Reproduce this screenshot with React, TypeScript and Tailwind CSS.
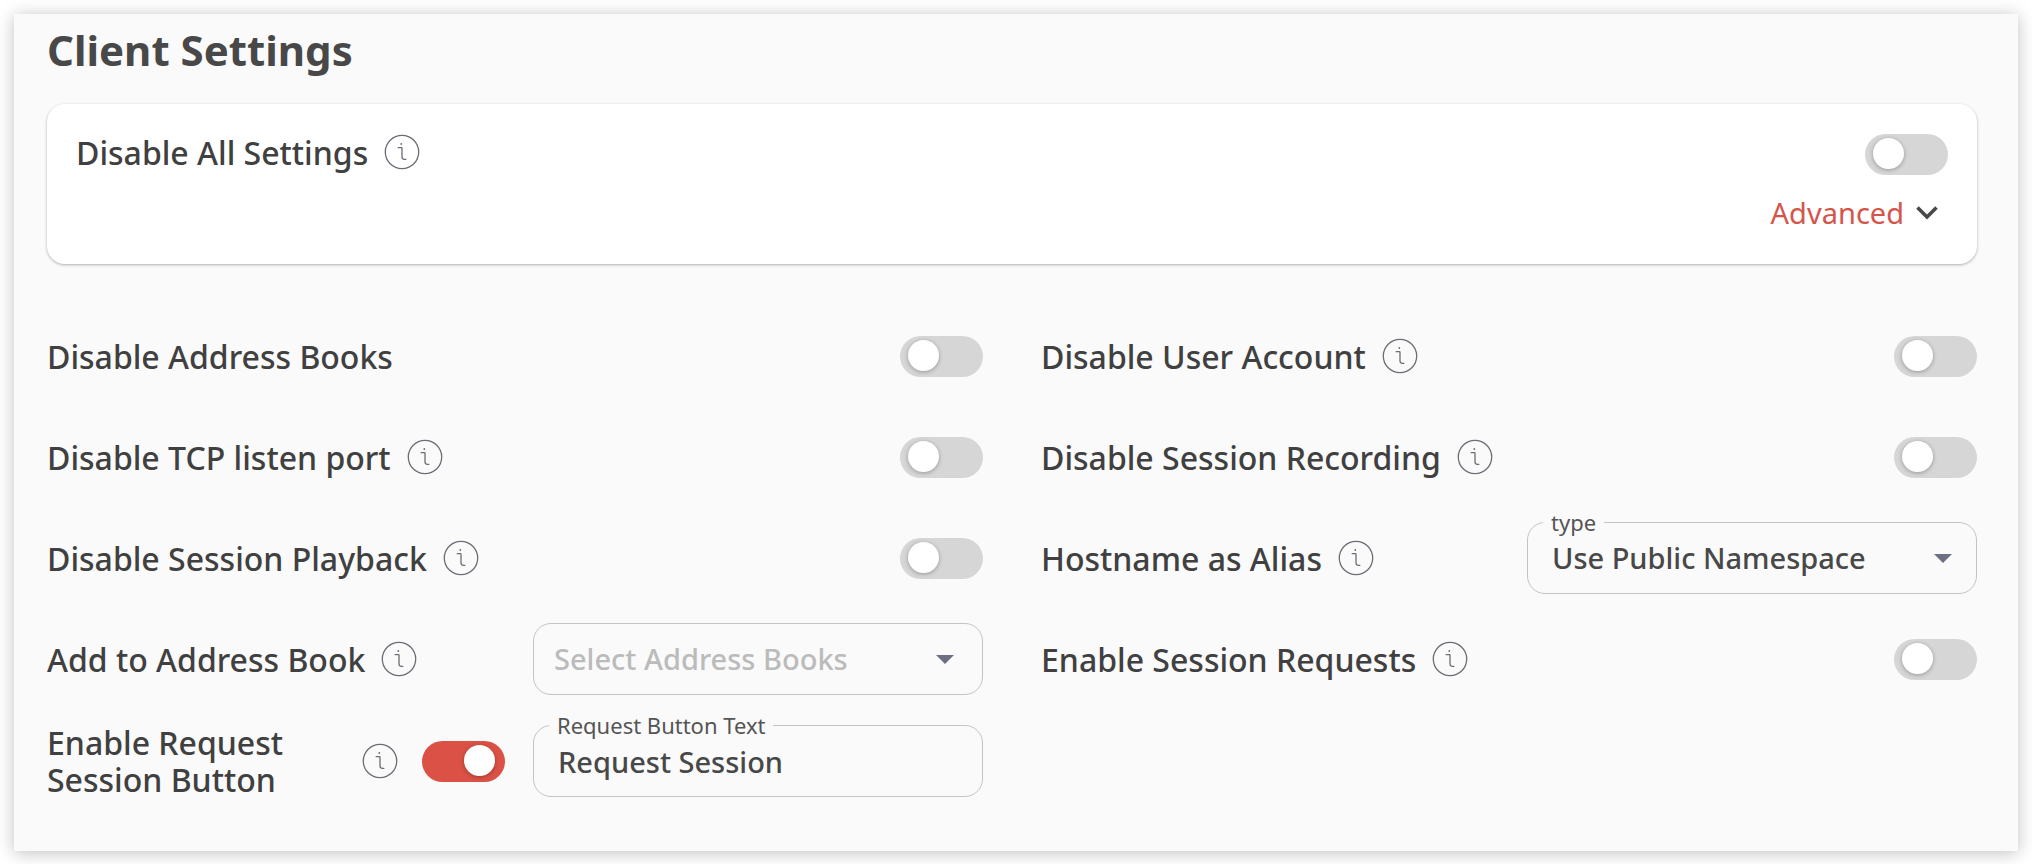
import { useState } from "react";

type ToggleRowProps = {
  id: string;
  label: string;
  info?: boolean;
};

const labelDesign = "text-[32px] leading-[37px] font-medium text-[#404040]";
const boxDesign =
  "h-[72px] w-full appearance-none rounded-[18px] border border-[#c4c4c4] bg-transparent text-[29px] font-medium outline-none";
const notchDesign =
  "absolute -top-4 left-4 bg-[#fafafa] px-2 text-[22px] leading-8 text-[#555555]";
const rowDesign = "flex min-h-[72px] items-center";

const InfoIcon = () => (
  <svg
    viewBox="0 0 36 36"
    className="ml-4 size-9 shrink-0"
    fill="none"
    stroke="#6b6e76"
    strokeWidth="1.3"
    strokeLinecap="round"
    aria-hidden="true"
  >
    <circle cx="18" cy="18" r="16.7" />
    <circle cx="17.3" cy="10" r="0.9" fill="#6b6e76" stroke="none" />
    <path d="M14.2 13.7h3.4c.3 0 .4.2.4.5v8.6c0 1.8.8 2.5 2.3 2.5h1.6" />
  </svg>
);

const Caret = ({ className }: { className: string }) => (
  <svg viewBox="0 0 18 9" className={className} fill="#6c7080" aria-hidden="true">
    <path d="M0 0h18L9 9z" />
  </svg>
);

const Toggle = ({ id, on = false }: { id: string; on?: boolean }) => {
  const [checked, setChecked] = useState(on);

  return (
    <input
      id={id}
      type="checkbox"
      role="switch"
      checked={checked}
      onChange={(e) => setChecked(e.target.checked)}
      className="h-[41px] w-[83px] shrink-0 cursor-pointer appearance-none rounded-full bg-[#d6d6d6] pt-1 pl-2 before:block before:size-[31px] before:rounded-full before:bg-white before:shadow-[0_1px_4px_rgba(0,0,0,0.3)] checked:bg-[#dc5145] checked:pl-[42px]"
    />
  );
};

const ToggleRow = ({ id, label, info = true }: ToggleRowProps) => (
  <div className={rowDesign}>
    <label htmlFor={id} className={labelDesign}>
      {label}
    </label>
    {info && <InfoIcon />}
    <div className="ml-auto flex">
      <Toggle id={id} />
    </div>
  </div>
);

const App = () => {
  const [open, setOpen] = useState(false);

  return (
    <div className="bg-white p-3.5 font-['Noto_Sans',sans-serif]">
      <main className="bg-[#fafafa] pt-2 pr-[41px] pb-[53px] pl-[33px] shadow-[0_2px_16px_rgba(0,0,0,0.25)]">
        <h1 className="text-[42px] leading-[56px] font-bold text-[#484848]">
          Client Settings
        </h1>

        {/* master switch */}
        <section className="mt-[26px] rounded-[18px] bg-white px-[29px] pt-[30px] pb-[29px] shadow-[0_1px_3px_rgba(0,0,0,0.3)]">
          <div className="flex items-start">
            <label htmlFor="disable-all" className={labelDesign}>
              Disable All Settings
            </label>
            <InfoIcon />
            <div className="ml-auto flex">
              <Toggle id="disable-all" />
            </div>
          </div>
          <div className="flex justify-end pt-4">
            <button
              type="button"
              aria-expanded={open}
              onClick={() => setOpen(!open)}
              className="flex cursor-pointer items-center gap-3 pr-2.5 text-[29px] leading-[44px] text-[#d6554b]"
            >
              Advanced
              <svg
                viewBox="0 0 22 14"
                className="h-3.5 w-[22px]"
                fill="none"
                stroke="#484848"
                strokeWidth="3.6"
                aria-hidden="true"
              >
                <path d="M1.5 1.5 11 11l9.500-9.500" />
              </svg>
            </button>
          </div>
        </section>

        {/* individual settings */}
        <form className="mt-14 grid grid-cols-2 gap-x-[58px] gap-y-[29px]">
          <ToggleRow id="address-books" label="Disable Address Books" info={false} />
          <ToggleRow id="user-account" label="Disable User Account" />
          <ToggleRow id="tcp-port" label="Disable TCP listen port" />
          <ToggleRow id="session-recording" label="Disable Session Recording" />
          <ToggleRow id="session-playback" label="Disable Session Playback" />

          <div className={rowDesign}>
            <span className={labelDesign}>Hostname as Alias</span>
            <InfoIcon />
            <div className="relative ml-auto w-[450px]">
              <select id="alias-type" className={`${boxDesign} pr-16 pl-6 text-[#484848]`}>
                <option>Use Public Namespace</option>
              </select>
              <label htmlFor="alias-type" className={notchDesign}>
                type
              </label>
              <Caret className="pointer-events-none absolute top-8 right-[25px] h-[9px] w-[18px]" />
            </div>
          </div>

          <div className={rowDesign}>
            <label htmlFor="add-to-book" className={labelDesign}>
              Add to Address Book
            </label>
            <InfoIcon />
            <div className="relative ml-auto w-[450px]">
              <select id="add-to-book" className={`${boxDesign} pr-16 pl-5 text-[#bbbbbb]`}>
                <option>Select Address Books</option>
              </select>
              <Caret className="pointer-events-none absolute top-8 right-[29px] h-[9px] w-[18px]" />
            </div>
          </div>

          <ToggleRow id="session-requests" label="Enable Session Requests" />

          <div className={rowDesign}>
            <label htmlFor="request-button" className={`${labelDesign} flex-1`}>
              Enable Request Session Button
            </label>
            <InfoIcon />
            <div className="mr-7 ml-6 flex">
              <Toggle id="request-button" on />
            </div>
            <div className="relative w-[450px]">
              <input
                id="request-text"
                type="text"
                defaultValue="Request Session"
                className={`${boxDesign} px-6 text-[#484848]`}
              />
              <label htmlFor="request-text" className={notchDesign}>
                Request Button Text
              </label>
            </div>
          </div>
        </form>
      </main>
    </div>
  );
};

export default App;
